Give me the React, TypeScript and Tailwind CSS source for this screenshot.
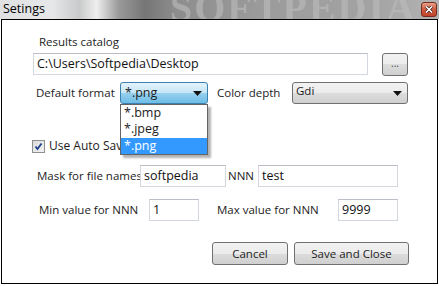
const font = "font-['Segoe_UI','Open_Sans','Noto_Sans',sans-serif]"

function TextBox({ value, width }: { value: string; width: string }) {
  return (
    <div
      className={`${width} h-[22px] shrink-0 whitespace-nowrap border border-[#d3d8de] border-t-[#b9bec6] bg-white px-[3px] text-[12.5px] leading-[20px] text-[#111]`}
    >
      {value}
    </div>
  )
}

function Arrow() {
  return (
    <svg width="9" height="5" viewBox="0 0 9 5" className="shrink-0">
      <path d="M0 0 L9 0 L4.5 5 Z" fill="#111" />
    </svg>
  )
}

const btn =
  'rounded-[3px] border border-[#707070] bg-[linear-gradient(#f2f2f2,#ebebeb_50%,#dddddd_50%,#cfcfcf)]'

export default function App() {
  return (
    <div className={`relative w-[439px] h-[286px] overflow-hidden bg-white text-[#1c1c1c] ${font}`}>
      {/* Title bar */}
      <div className="relative h-[19px] overflow-hidden bg-[linear-gradient(90deg,#dfe1e3_0%,#e6e7e8_12%,#c9cacb_18%,#eeeeee_22%,#9a9a9a_27%,#767676_33%,#8d8d8d_40%,#9b9b9b_60%,#a3a3a3_85%,#b4b4b4_100%)]">
        <span className="absolute left-[170px] top-[-12px] whitespace-nowrap font-['Liberation_Serif',serif] text-[40px] font-bold leading-[40px] tracking-[2px] text-[#bdbdbd] opacity-60 blur-[0.7px]">
          SOFTPEDIA
        </span>
        <span className="absolute left-[3px] top-[1px] text-[12.5px] leading-[16px] text-black">Setings</span>
        <div className="absolute right-[2px] top-[2px] flex h-[15px] w-[16px] items-center justify-center rounded-[3px] border border-[#7a2d1e] bg-[linear-gradient(#e8a08c,#cf5a40_50%,#c2432a)]">
          <svg width="8" height="7" viewBox="0 0 8 7">
            <path d="M1 0.5 L7 6.5 M7 0.5 L1 6.5" stroke="#3a1a14" strokeWidth="3" />
            <path d="M1 0.5 L7 6.5 M7 0.5 L1 6.5" stroke="#fff" strokeWidth="1.6" />
          </svg>
        </div>
      </div>

      {/* Dialog body */}
      <div className="ml-[1px] h-[265px] w-[437px] border border-black bg-white">
        <div className="whitespace-nowrap pl-[31px] pt-[14px] text-[11.5px] leading-[16px]">
          <div className="ml-[6px]">Results catalog</div>

          <div className="mt-[3px] flex items-start">
            <TextBox value="C:\Users\Softpedia\Desktop" width="w-[335px]" />
            <button className={`${btn} ml-[14px] flex h-[23px] w-[26px] items-center justify-center pb-[4px] text-[10px] text-[#444]`}>
              ...
            </button>
          </div>

          <div className="mt-[6px] flex items-center">
            <span className="w-[87px] shrink-0 pl-[3px]">Default format</span>
            <div className="flex h-[22px] w-[88px] shrink-0 items-center justify-between rounded-[3px] border border-[#3c7fb1] bg-[linear-gradient(#e3f4fc,#c4e5f6_50%,#98d1ef_50%,#6dbde6)] pl-[4px] pr-[5px]">
              <span className="text-[12.5px] leading-[16px]">*.png</span>
              <Arrow />
            </div>
            <span className="w-[84px] shrink-0 pl-[9px]">Color depth</span>
            <div className={`${btn} flex h-[22px] w-[116px] shrink-0 items-start justify-between pl-[3px] pr-[5px]`}>
              <span className="text-[11.5px] leading-[15px]">Gdi</span>
              <div className="mt-[8px]">
                <Arrow />
              </div>
            </div>
          </div>

          <div className="mt-[34px] ml-[-1px] flex items-center">
            <div className="flex h-[13px] w-[13px] items-center justify-center border border-[#8e8f8f] bg-[linear-gradient(135deg,#d9dadb,#f4f4f4)]">
              <svg width="9" height="9" viewBox="0 0 9 9">
                <path d="M1.5 4.5 L3.5 7 L7.5 1.5" stroke="#1f3f88" strokeWidth="1.8" fill="none" />
              </svg>
            </div>
            <span className="ml-[4px] text-[12px]">Use Auto Save</span>
          </div>

          <div className="mt-[11px] flex items-center">
            <span className="w-[107px] shrink-0 pl-[4px]">Mask for file names</span>
            <TextBox value="softpedia" width="w-[86px]" />
            <span className="w-[32px] shrink-0 pl-[2px]">NNN</span>
            <TextBox value="test" width="w-[140px]" />
          </div>

          <div className="mt-[12px] flex items-center">
            <span className="w-[116px] shrink-0 pl-[6px]">Min value for NNN</span>
            <TextBox value="1" width="w-[50px]" />
            <span className="w-[139px] shrink-0 pl-[18px]">Max value for NNN</span>
            <TextBox value="9999" width="w-[60px]" />
          </div>

          <div className="mt-[21px] ml-[179px] flex gap-[6px]">
            <button className={`${btn} h-[23px] w-[76px] text-[11.5px]`}>Cancel</button>
            <button className={`${btn} h-[23px] w-[115px] text-[11.5px]`}>Save and Close</button>
          </div>
        </div>
      </div>

      {/* Open dropdown list */}
      <div className="absolute left-[120px] top-[104px] w-[88px] border border-[#646464] bg-white text-[12.5px] leading-[16px] shadow-[3px_3px_2px_rgba(0,0,0,0.3)]">
        <div className="h-[16px] pl-[3px]">*.bmp</div>
        <div className="h-[17px] pl-[3px]">*.jpeg</div>
        <div className="h-[16px] bg-[#3399ff] pl-[3px] text-white">*.png</div>
      </div>
    </div>
  )
}
